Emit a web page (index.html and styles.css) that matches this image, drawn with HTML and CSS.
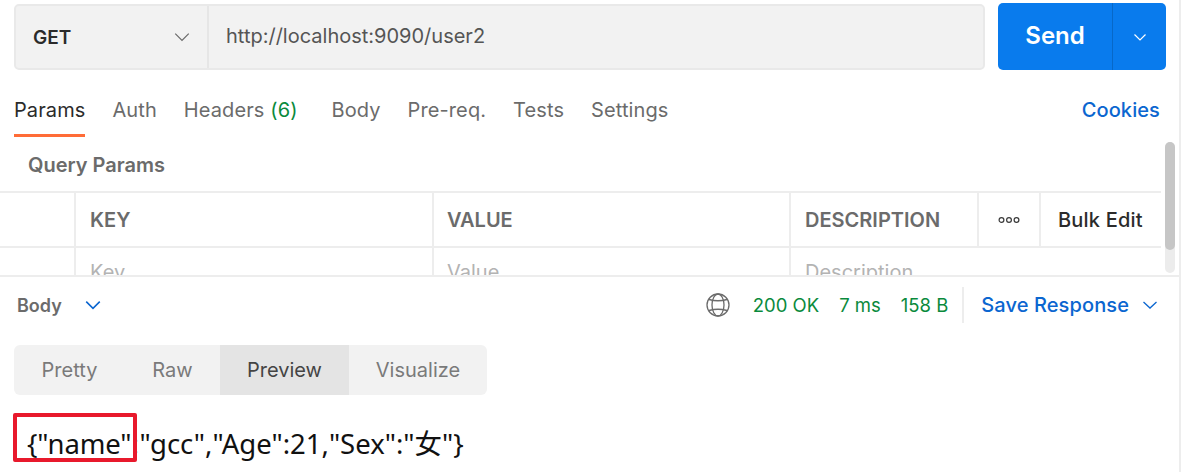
FILE: index.html
```html
<!DOCTYPE html>
<html lang="en">
<head>
<meta charset="utf-8">
<title>Request</title>
<link rel="stylesheet" href="styles.css">
</head>
<body>
<div class="app">
  <div class="request-bar">
    <div class="url-box">
      <div class="method"><span>GET</span>
        <svg class="chev" width="18" height="18" viewBox="0 0 16 16"><path d="M2 5 8 11l6-6" fill="none" stroke="#6b6b6b" stroke-width="1.100"/></svg>
      </div>
      <div class="url">http://localhost:9090/user2</div>
    </div>
    <div class="send">
      <div class="send-label">Send</div>
      <div class="send-arrow"><svg width="16" height="16" viewBox="0 0 16 16"><path d="M2.500 5.500 8 11l5.500-5.500" fill="none" stroke="#fff" stroke-width="1.200"/></svg></div>
    </div>
  </div>
  <div class="tabs">
    <div class="tab active">Params</div>
    <div class="tab">Auth</div>
    <div class="tab tab-headers">Headers <em>(6)</em></div>
    <div class="tab">Body</div>
    <div class="tab">Pre-req.</div>
    <div class="tab">Tests</div>
    <div class="tab">Settings</div>
    <div class="cookies">Cookies</div>
  </div>
  <div class="params">
    <div class="params-title">Query Params</div>
    <div class="table">
      <div class="row head">
        <div class="cell c0"></div>
        <div class="cell c1">KEY</div>
        <div class="cell c2">VALUE</div>
        <div class="cell c3">DESCRIPTION</div>
        <div class="cell c4"><svg width="24" height="8" viewBox="0 0 24 8"><g fill="none" stroke="#3a3a3a" stroke-width="1.200"><circle cx="4.500" cy="4" r="2.400"/><circle cx="12" cy="4" r="2.400"/><circle cx="19.500" cy="4" r="2.400"/></g></svg></div>
        <div class="cell c5">Bulk Edit</div>
      </div>
      <div class="row body-row">
        <div class="cell c0"></div>
        <div class="cell c1">Key</div>
        <div class="cell c2">Value</div>
        <div class="cell c3">Description</div>
      </div>
    </div>
    <div class="scroll-track"><div class="scroll-thumb"></div></div>
  </div>
  <div class="response">
    <div class="res-head">
      <div class="res-title">Body
        <svg width="18" height="18" viewBox="0 0 16 16"><path d="M2 5 8 11l6-6" fill="none" stroke="#0b66d0" stroke-width="1.400"/></svg>
      </div>
      <div class="res-meta">
        <svg class="globe" width="24" height="24" viewBox="0 0 24 24"><g fill="none" stroke="#6b6b6b" stroke-width="1.300"><circle cx="12" cy="12" r="11"/><ellipse cx="12" cy="12" rx="6" ry="11"/><path d="M3 6.500Q12 9 21 6.500M3 17.500Q12 15 21 17.500"/></g></svg>
        <span class="ok s1">200 OK</span>
        <span class="ok s2">7 ms</span>
        <span class="ok s3">158 B</span>
        <span class="save">Save Response
          <svg width="16" height="16" viewBox="0 0 16 16"><path d="M1.500 5 8 11l6.500-6" fill="none" stroke="#0b66d0" stroke-width="1.300"/></svg>
        </span>
      </div>
    </div>
    <div class="modes">
      <div class="mode m1">Pretty</div>
      <div class="mode m2">Raw</div>
      <div class="mode m3 on">Preview</div>
      <div class="mode m4">Visualize</div>
    </div>
    <div class="preview"><span class="key">{"name":</span>"gcc","Age":21,"Sex":"女"}</div>
  </div>
  <div class="redbox"></div>
</div>
</body>
</html>
```
FILE: styles.css
```css
* { box-sizing: border-box; }
html, body { margin: 0; height: 472px; overflow: hidden; background: #fff; }
body { font-family: Inter, "Noto Sans", sans-serif; color: #6b6b6b; }
.app { position: relative; width: 1181px; height: 472px; border-right: 2px solid #ededed; overflow: hidden; }

.request-bar { display: flex; height: 70px; padding: 3px 13px 0 14px; gap: 13px; }
.url-box { width: 971px; height: 66px; margin-top: 1px; display: flex; background: #f2f2f2; border: 2px solid #e9e9e9; border-radius: 5px; }
.method { width: 193px; display: flex; align-items: center; justify-content: space-between; padding: 0 16px 0 17px; border-right: 2px solid #e6e6e6; font-size: 19px; font-weight: 600; color: #2b2b2b; }
.url { flex: 1; padding: 0 0 2px 17px; display: flex; align-items: center; font-size: 20px; color: #555; }
.send { width: 168px; height: 67px; display: flex; background: #097bed; border-radius: 5px; color: #fff; }
.send-label { width: 115px; display: flex; align-items: center; justify-content: center; border-right: 1px solid #0768c8; font-size: 24px; font-weight: 600; padding-bottom: 2px; }
.send-arrow { flex: 1; display: flex; align-items: center; justify-content: center; }

.tabs { display: flex; height: 67px; padding: 0 19px 0 14px; font-size: 20px; letter-spacing: .1px; color: #6b6b6b; }
.tab { height: 67px; padding-top: 28px; margin-right: 27px; line-height: 24px; }
.tab.active { color: #2b2b2b; border-bottom: 3px solid #ff6c37; }
.tab em { font-style: normal; color: #0a8a3c; }
.tab-headers { margin-right: 34px; }
.cookies { margin-left: auto; padding-top: 28px; line-height: 24px; color: #0b66d0; font-weight: 500; }

.params { position: relative; height: 140px; overflow: hidden; border-bottom: 2px solid #ededed; }
.params-title { height: 54px; padding: 16px 0 0 28px; line-height: 24px; font-size: 20px; font-weight: 600; color: #6b6b6b; }
.table { width: 1161px; border-top: 2px solid #ededed; }
.row { display: flex; height: 55px; }
.head { font-size: 20px; font-weight: 600; border-bottom: 2px solid #ededed; }
.cell { display: flex; align-items: center; padding-left: 14px; border-right: 2px solid #ededed; }
.c0 { width: 76px; padding: 0; }
.c1 { width: 358px; }
.c2 { width: 357px; padding-left: 13px; }
.c3 { width: 188px; }
.body-row .c3 { border-right: 0; }
.c4 { width: 62px; padding: 0; justify-content: center; }
.c5 { flex: 1; border: 0; padding-left: 17px; font-weight: 500; letter-spacing: .2px; color: #2b2b2b; }
.body-row { font-size: 20px; color: #b3b3b3; }
.body-row .cell { align-items: flex-start; padding-top: 12px; line-height: 24px; }
.scroll-track { position: absolute; left: 1165px; top: 5px; width: 10px; height: 131px; border-radius: 5px; background: #ececec; }
.scroll-thumb { height: 108px; border-radius: 5px; background: #c6c6c6; }

.res-head { display: flex; justify-content: space-between; height: 54px; padding: 2px 21px 0 17px; }
.res-title { display: flex; align-items: center; gap: 22px; font-size: 18px; font-weight: 600; }
.res-meta { display: flex; align-items: center; font-size: 18.500px; }
.globe { margin-right: 23px; }
.ok { color: #0a8a3c; white-space: pre; }
.s2, .s3 { margin-left: 20px; }
.save { display: flex; align-items: center; gap: 13px; height: 36px; margin-left: 14px; padding-left: 17px; border-left: 2px solid #ededed; color: #0b66d0; font-size: 20px; font-weight: 500; letter-spacing: .1px; }

.modes { display: flex; width: 473px; height: 50px; margin: 14px 0 0 14px; background: #f2f2f2; border-radius: 6px; overflow: hidden; font-size: 20px; color: #7a7a7a; }
.mode { display: flex; align-items: center; justify-content: center; }
.m1 { width: 111px; }
.m2 { width: 95px; }
.m3 { width: 129px; }
.m4 { flex: 1; }
.on { background: #e4e4e4; color: #444; }
.preview { padding: 31px 0 0 27px; line-height: 36px; font-size: 27.500px; color: #111; font-family: "Noto Sans", "Noto Sans CJK SC", sans-serif; white-space: nowrap; }
.key { letter-spacing: -.15px; margin-right: 1px; }
.redbox { position: absolute; left: 13px; top: 413px; width: 124px; height: 49px; border: 4px solid #e8192c; border-radius: 2px; }
```
